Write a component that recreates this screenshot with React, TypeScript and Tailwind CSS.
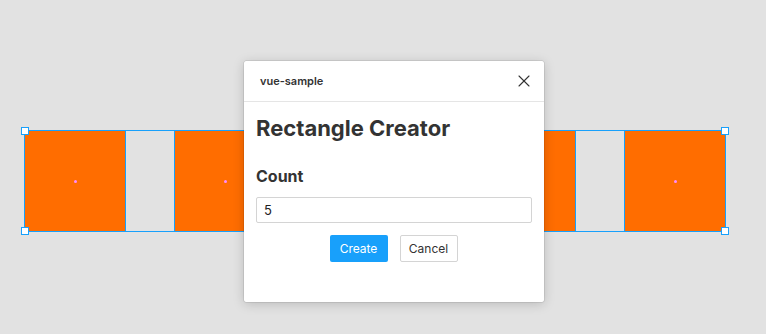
import { X } from "lucide-react";

const rects = [0, 1, 2, 3, 4];

const Handle = ({ className }: { className: string }) => (
  <div className={`absolute w-[8px] h-[8px] bg-white border border-[#18a0fb] ${className}`} />
);

const App = () => {
  return (
    <div
      className="relative w-[766px] h-[334px] overflow-hidden bg-[#e2e2e2]"
      style={{ fontFamily: "Inter, 'Noto Sans', sans-serif" }}
    >
      {/* Canvas selection */}
      <div className="pl-[24px] pt-[130px]">
        <div className="relative inline-flex gap-[50px] border border-[#18a0fb]">
          {rects.map((i) => (
            <div
              key={i}
              className="relative w-[100px] h-[100px] bg-[#ff6d00] outline outline-1 outline-[#18a0fb] flex items-center justify-center"
            >
              <div className="w-[3px] h-[3px] rounded-full bg-[#ff8cff]" />
            </div>
          ))}
          <Handle className="-left-[4px] -top-[4px]" />
          <Handle className="-left-[4px] -bottom-[4px]" />
          <Handle className="-right-[4px] -top-[4px]" />
          <Handle className="-right-[4px] -bottom-[4px]" />
        </div>
      </div>

      {/* Plugin modal */}
      <div className="absolute left-[244px] top-[61px] w-[300px] h-[241px] bg-white rounded-[2px] shadow-[0_2px_12px_rgba(0,0,0,0.18),0_0_0_0.5px_rgba(0,0,0,0.15)] flex flex-col">
        <div className="h-[41px] flex items-center justify-between pl-[16px] pr-[10px] border-b border-[#e5e5e5]">
          <span className="text-[11px] font-semibold text-[#333]">vue-sample</span>
          <X className="w-[20px] h-[20px] text-[#333]" strokeWidth={1.3} />
        </div>
        <div className="px-[12px] pt-[11px]">
          <h1 className="text-[22px] font-bold text-[#333] leading-[30px]">Rectangle Creator</h1>
          <h2 className="mt-[23px] text-[16px] font-bold text-[#333] leading-[20px]">Count</h2>
          <input
            defaultValue="5"
            className="mt-[11px] w-[276px] h-[26px] border border-[#d4d4d4] rounded-[2px] px-[7px] text-[13px] text-[#222] outline-none"
          />
          <div className="mt-[12px] flex justify-center gap-[12px] pr-[1px]">
            <button className="w-[58px] h-[27px] rounded-[2px] bg-[#18a0fb] text-white text-[12px]">
              Create
            </button>
            <button className="w-[58px] h-[27px] rounded-[2px] bg-white border border-[#d4d4d4] text-[#333] text-[12px]">
              Cancel
            </button>
          </div>
        </div>
      </div>
    </div>
  );
};

export default App;
